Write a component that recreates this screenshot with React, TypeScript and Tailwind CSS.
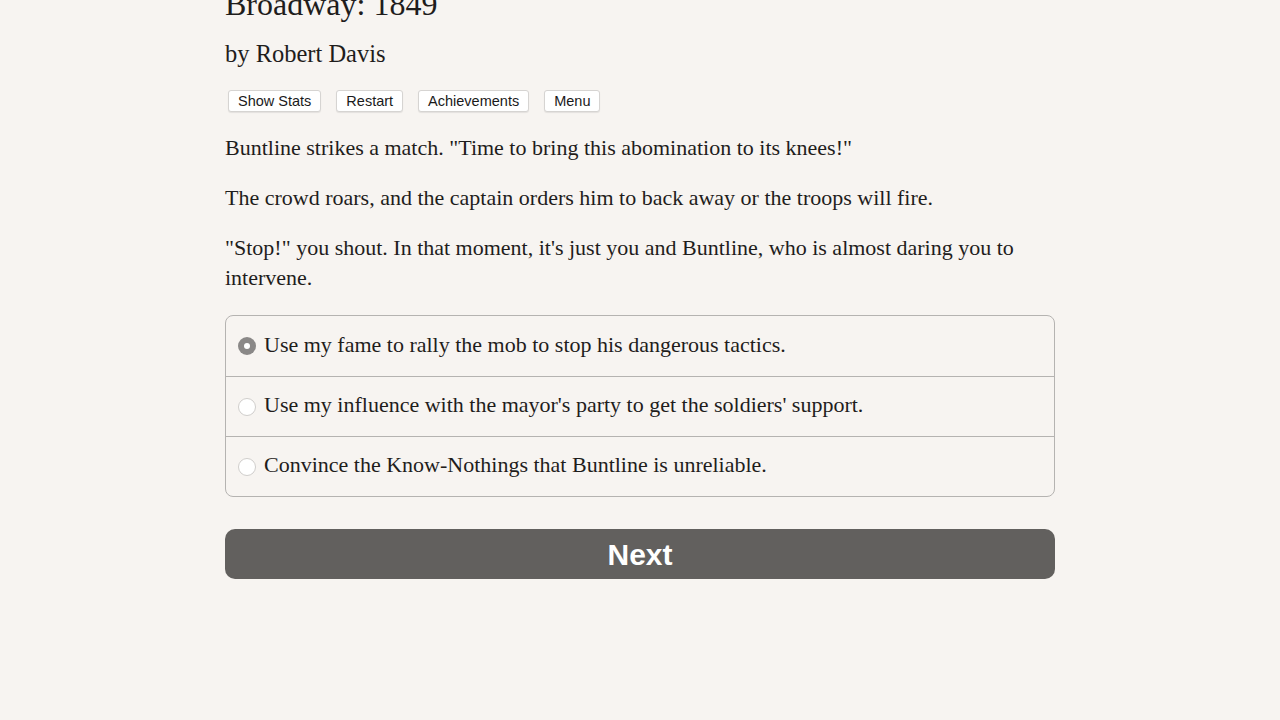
import { useState } from "react"

const serif = "font-['Liberation_Serif','Times_New_Roman',serif]"
const sans = "font-['Liberation_Sans',Arial,sans-serif]"

const options = [
  "Use my fame to rally the mob to stop his dangerous tactics.",
  "Use my influence with the mayor's party to get the soldiers' support.",
  "Convince the Know-Nothings that Buntline is unreliable.",
]

export default function App() {
  const [choice, setChoice] = useState(0)

  return (
    <div className={`flow-root min-h-[720px] w-full bg-[#f7f4f1] text-[#1f1d1c] ${serif}`}>
      <div className="mx-auto w-[830px]">
        {/* Title, scrolled partly out of view */}
        <h1 className="-mt-[14px] text-[32px] leading-[36px]">Broadway: 1849</h1>
        <h2 className="mt-[17px] text-[24.5px] leading-[30px]">by Robert Davis</h2>

        {/* Toolbar */}
        <div className={`mt-[21px] flex gap-[15px] pl-[3px] ${sans}`}>
          {["Show Stats", "Restart", "Achievements", "Menu"].map((label) => (
            <button
              key={label}
              className="h-[22px] rounded-[3px] border border-[#d6d4d2] bg-white px-[9px] text-[14.5px] leading-[20px] text-[#1a1a1a] shadow-[0_1px_1px_rgba(0,0,0,0.08)]"
            >
              {label}
            </button>
          ))}
        </div>

        {/* Story text */}
        <div className="mt-[21px] space-y-[20px] text-[22px] leading-[30px]">
          <p>Buntline strikes a match. "Time to bring this abomination to its knees!"</p>
          <p>The crowd roars, and the captain orders him to back away or the troops will fire.</p>
          <p>"Stop!" you shout. In that moment, it's just you and Buntline, who is almost daring you to intervene.</p>
        </div>

        {/* Choices */}
        <div className="mt-[22px] overflow-hidden rounded-[8px] border border-[#b5b3b1]">
          {options.map((text, i) => (
            <label
              key={i}
              onClick={() => setChoice(i)}
              className={`flex h-[60px] cursor-pointer items-center gap-[8px] pl-[12px] text-[22px] ${
                i > 0 ? "border-t border-[#b5b3b1]" : ""
              }`}
            >
              <span
                className={`flex h-[18px] w-[18px] shrink-0 items-center justify-center rounded-full ${
                  choice === i
                    ? "bg-[#8a8887]"
                    : "border border-[#cfcdcb] bg-white"
                }`}
              >
                {choice === i && <span className="h-[6px] w-[6px] rounded-full bg-white" />}
              </span>
              <span className="-mt-[4px]">{text}</span>
            </label>
          ))}
        </div>

        {/* Next button */}
        <button
          className={`mt-[32px] flex h-[50px] w-full items-center justify-center rounded-[10px] bg-[#62605e] text-[30px] font-bold text-white ${sans}`}
        >
          Next
        </button>
      </div>
    </div>
  )
}
